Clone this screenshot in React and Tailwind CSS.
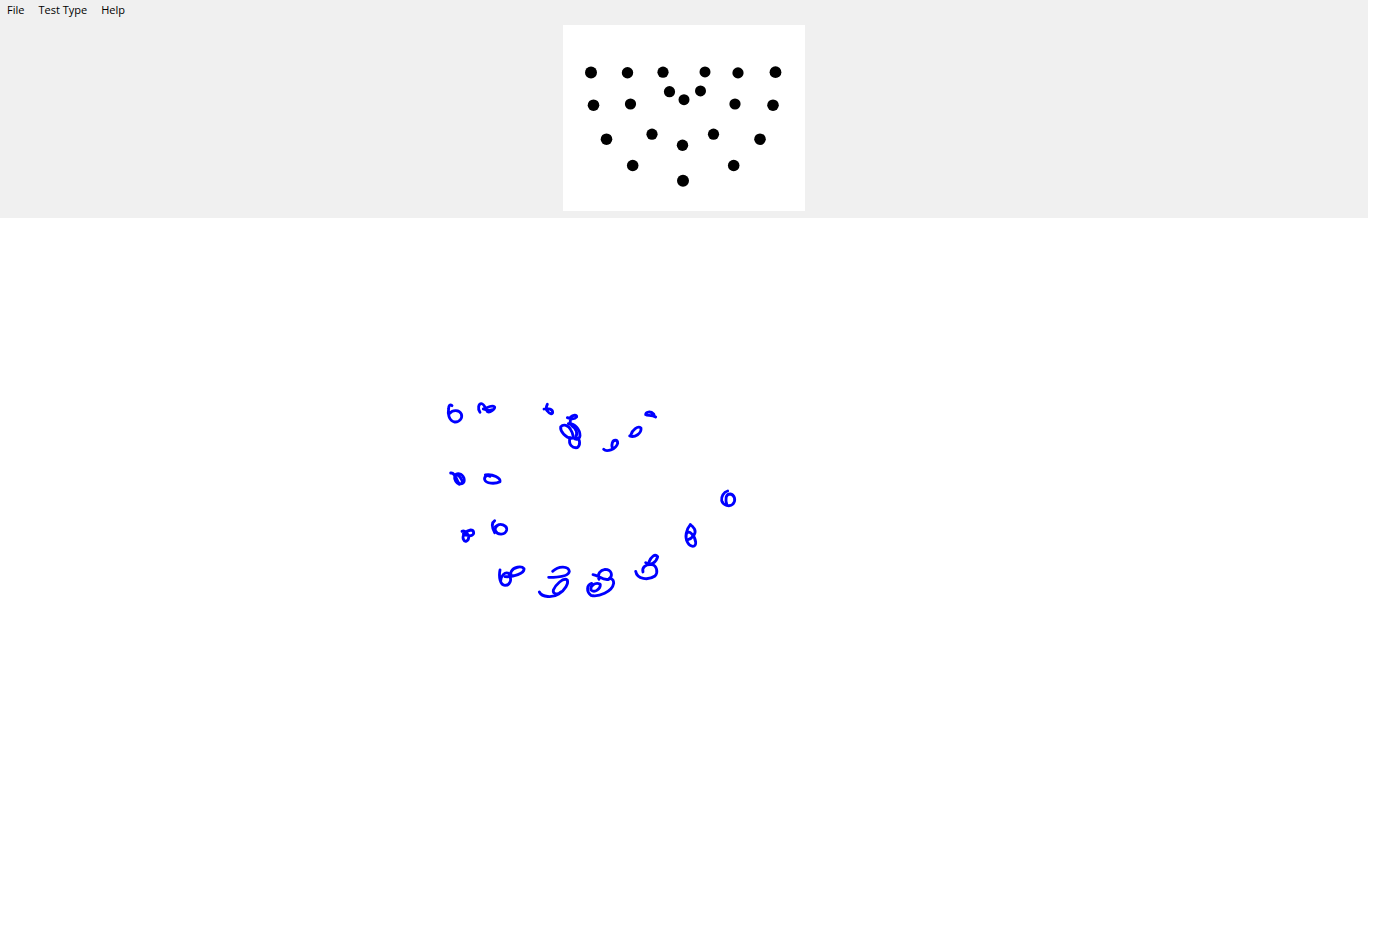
const dots = [
  [591, 72.5, 6], [627.5, 72.8, 5.7], [663, 72.2, 5.6], [705, 71.9, 5.5], [738, 72.9, 5.6], [775.5, 72.2, 5.9],
  [669.5, 91.7, 5.6], [700.5, 90.9, 5.5], [684, 99.7, 5.5],
  [593.5, 105.2, 5.8], [630.5, 104, 5.6], [735, 104, 5.6], [773, 105.2, 5.8],
  [606.5, 139.2, 5.8], [652, 134.2, 5.6], [713.5, 134.2, 5.6], [760, 139.2, 5.8], [682.5, 145.2, 5.7],
  [632.7, 165.5, 5.8], [733.7, 165.5, 5.8], [683, 180.7, 6],
];

const strokeGroups = [
  {
    t: "translate(440 395) scale(0.33333)",
    d: [
      "M36 32 C30 27 26 32 26 40 C23 55 26 78 44 81 C60 82 68 68 64 57 C58 44 38 44 30 54",
      "M120 52 C112 40 116 26 124 26 C132 26 136 38 142 50 C150 55 165 42 164 36 C155 28 140 40 130 42 C140 46 148 48 156 44",
      "M322 28 C318 36 316 42 322 48 C328 56 338 60 338 52 C338 44 325 38 312 42",
      "M382 68 C392 72 404 74 410 66 C412 58 398 60 392 66 L390 88",
      "M362 96 C370 86 385 90 392 104 C400 116 402 130 394 130 C378 128 360 110 362 96",
      "M385 86 C405 84 420 104 420 122 C418 134 408 136 400 128",
      "M395 92 C410 100 414 118 406 128",
      "M390 128 C384 150 398 160 412 158 C422 150 420 134 412 130",
      "M32 234 C44 232 48 250 55 262 C62 270 76 266 72 250 C66 234 50 232 44 244 C42 254 50 266 58 268",
      "M52 240 C60 244 66 254 68 264",
      "M136 240 C160 236 182 250 180 260 C165 268 138 266 134 254 C132 244 142 238 150 244",
    ],
  },
  {
    t: "translate(595 400) scale(0.33333)",
    d: [
      "M26 148 C34 156 62 150 68 130 C68 118 56 118 52 128 C50 136 50 142 54 146",
      "M104 108 C120 114 140 100 138 84 C128 76 112 90 108 104",
      "M182 51 C170 44 158 48 152 44 C152 36 166 32 176 42 L178 48",
    ],
  },
  {
    t: "translate(450 510) scale(0.33333)",
    d: [
      "M36 64 C44 60 56 72 56 82 C56 94 44 98 40 88 C36 76 48 62 62 60 C72 60 74 72 66 76 C58 80 50 76 40 72",
      "M134 32 C124 38 126 52 134 68",
      "M136 50 C150 36 172 46 170 60 C166 76 142 76 136 62 C134 54 138 48 146 44",
      "M150 180 C146 200 150 226 165 226 C180 226 188 210 176 190 C164 184 152 200 152 212",
      "M165 200 C190 202 224 190 222 176 C214 166 190 172 184 184 C180 192 184 198 190 198",
      "M268 246 C276 262 308 264 326 252 C346 240 356 220 352 210 C340 200 316 226 310 240 C308 252 322 256 332 246",
      "M296 202 C320 202 356 200 358 184 C356 168 326 166 308 184",
    ],
  },
  {
    t: "translate(575 490) scale(0.33333)",
    d: [
      "M458 3 C446 6 438 20 440 32 C444 46 464 52 474 42 C484 30 478 14 466 12 C452 12 450 26 456 46",
      "M346 104 C334 118 328 140 338 158 C346 172 364 174 362 156 C360 136 340 118 336 130",
      "M336 150 C352 146 366 130 358 116 C354 110 350 106 346 104",
      "M182 244 C186 268 220 272 240 258 C250 248 246 226 230 224 C212 222 200 232 204 246",
      "M212 218 C225 228 244 218 248 200 C240 190 228 200 222 216",
      "M50 280 C34 285 34 305 48 316 C70 322 112 306 116 280 C116 266 106 264 100 268",
      "M75 282 C60 276 44 288 48 300 C60 310 76 296 76 284",
      "M54 254 C70 256 84 272 100 268 C116 258 110 238 90 238 C76 240 66 252 72 268",
    ],
  },
];

export default function App() {
  return (
    <div className="w-[1381px] h-[925px] bg-white overflow-hidden font-['Open_Sans','Noto_Sans',sans-serif]">
      <div className="w-[1368px] h-[218px] bg-[#f0f0f0] flex flex-col items-center">
        <nav className="self-stretch h-[25px] pt-[2px] pl-[7px] flex gap-[14px] text-[11px] leading-[16px] text-black">
          <span>File</span>
          <span>Test Type</span>
          <span>Help</span>
        </nav>
        <div className="w-[242px] h-[186px] bg-white">
          <svg className="block w-full h-full" viewBox="563 25 242 186">
            {dots.map(([cx, cy, r], i) => (
              <circle key={i} cx={cx} cy={cy} r={r} fill="#000" />
            ))}
          </svg>
        </div>
      </div>
      <svg className="block w-[1381px] h-[707px]" viewBox="0 218 1381 707" fill="none">
        {strokeGroups.map((g, i) => (
          <g key={i} transform={g.t} stroke="#0000ff" strokeWidth="8.5" strokeLinecap="round" strokeLinejoin="round">
            {g.d.map((d, j) => (
              <path key={j} d={d} />
            ))}
          </g>
        ))}
      </svg>
    </div>
  );
}
